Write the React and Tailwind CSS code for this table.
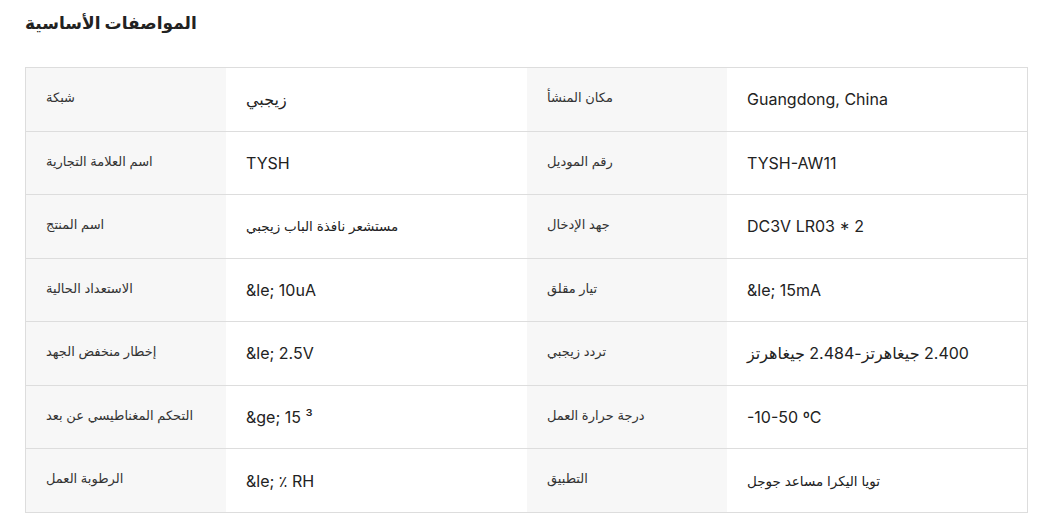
import React from "react";

// [label, value, valueSize] pairs per row
const rows = [
  [["شبكة", "زيجبي"], ["مكان المنشأ", "Guangdong, China"]],
  [["اسم العلامة التجارية", "TYSH"], ["رقم الموديل", "TYSH-AW11"]],
  [["اسم المنتج", "مستشعر نافذة الباب زيجبي", "sm"], ["جهد الإدخال", "DC3V LR03 * 2"]],
  [["الاستعداد الحالية", "&le; 10uA"], ["تيار مقلق", "&le; 15mA"]],
  [["إخطار منخفض الجهد", "&le; 2.5V"], ["تردد زيجبي", "2.400 جيغاهرتز-2.484 جيغاهرتز"]],
  [["التحكم المغناطيسي عن بعد", "&ge; 15 ³"], ["درجة حرارة العمل", "-10-50 ºC"]],
  [["الرطوبة العمل", "&le; ٪ RH"], ["التطبيق", "تويا اليكرا مساعد جوجل", "sm"]],
];

const Label = ({ children }) => (
  <div className="w-[200px] shrink-0 bg-[#f7f7f7] px-5 pt-5 text-[13px] leading-[18px] text-[#333]">
    {children}
  </div>
);

const Value = ({ children, size }) => (
  <div
    className={
      size === "sm"
        ? "w-[301px] shrink-0 px-5 flex items-center text-[13.5px] leading-6 text-[#222]"
        : "w-[301px] shrink-0 px-5 flex items-center text-[16px] leading-6 text-[#222]"
    }
  >
    <span dir="auto">{children}</span>
  </div>
);

export default function App() {
  return (
    <div
      className="w-[1050px] h-[522px] bg-white overflow-hidden"
      style={{ fontFamily: "Inter, 'DejaVu Sans', sans-serif" }}
    >
      <h2 className="pl-[25px] pt-[11px] text-[17px] leading-[24px] font-bold text-[#222]">
        المواصفات الأساسية
      </h2>
      <div className="ml-[25px] mt-[32px] w-[1003px] border border-[#dddddd]">
        {rows.map((r, i) => (
          <div
            key={i}
            className={
              i < rows.length - 1
                ? "flex h-[63.5px] border-b border-[#dddddd]"
                : "flex h-[63px]"
            }
          >
            {r.map((c, j) => (
              <React.Fragment key={j}>
                <Label>{c[0]}</Label>
                <Value size={c[2]}>{c[1]}</Value>
              </React.Fragment>
            ))}
          </div>
        ))}
      </div>
    </div>
  );
}
